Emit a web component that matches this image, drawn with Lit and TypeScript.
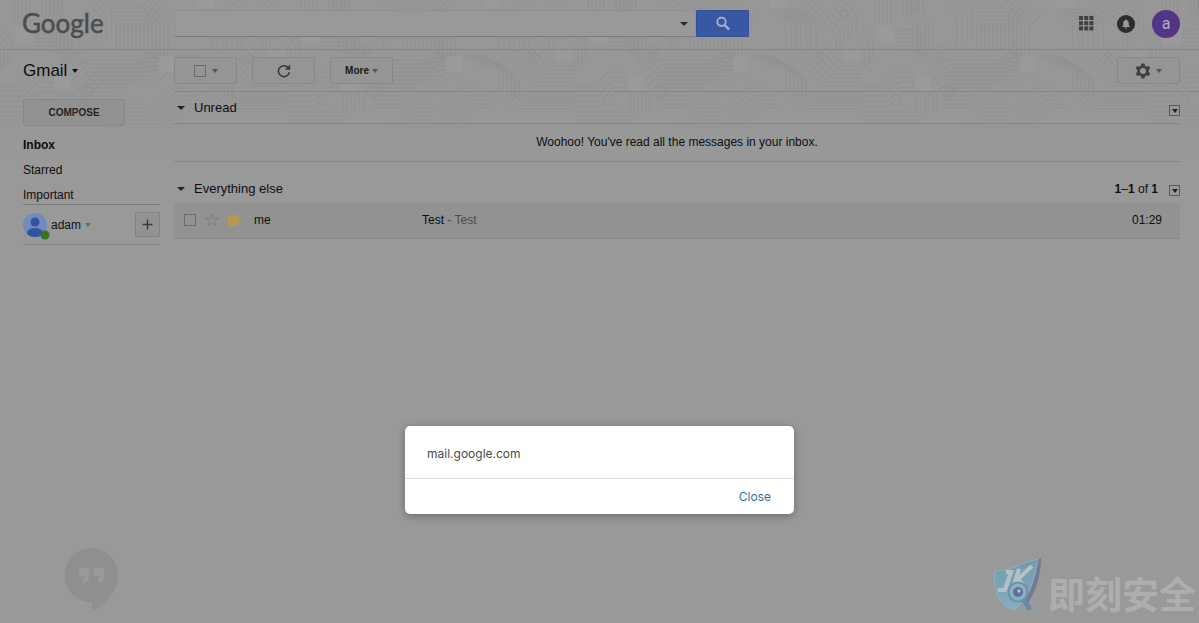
import { LitElement, html, svg, css } from "lit";
import { customElement, state, property } from "lit/decorators.js";

type Pt = [number, number];

/** A bundle of parallel traces: the same polyline repeated with a fixed shift. */
const bundle = (points: Pt[], count: number, dx: number, dy: number): string => {
  let d = "";
  for (let i = 0; i < count; i++) {
    d += points.map(([x, y], k) => `${k ? "L" : "M"}${x + dx * i} ${y + dy * i}`).join("");
  }
  return d;
};

const TRACES = [
  bundle([[42, 0], [42, 14], [52, 26], [52, 49], [66, 64]], 6, 4, 0),
  bundle([[0, 28], [12, 40], [12, 58], [0, 70]], 5, -4, 4),
  bundle([[66, 78], [84, 60], [140, 60], [154, 46]], 6, 4, 4),
  bundle([[84, 72], [128, 72], [146, 54], [160, 54]], 5, 0, 4),
  bundle([[35, 30], [56, 30], [66, 40]], 6, 0, 4),
  bundle([[14, 0], [14, 24]], 5, 4, 0),
  bundle([[84, 8], [96, 20], [96, 46]], 4, 5, -3),
  bundle([[110, 8], [140, 8], [152, -4]], 5, 3, 4),
  bundle([[116, 24], [116, 52]], 8, 4, 0),
  bundle([[160, 0], [148, 12], [148, 50], [156, 60]], 6, 4, 3),
  bundle([[176, 56], [198, 56], [212, 70], [212, 90]], 6, 4, 2),
  bundle([[200, 14], [212, 26], [212, 46], [226, 62]], 7, 5, 0),
  bundle([[246, 18], [262, 34], [262, 52]], 6, 4, -4),
  bundle([[230, 66], [250, 86], [280, 86]], 6, 4, -4),
  bundle([[-8, 86], [20, 86], [34, 72], [50, 72]], 5, 2, 5),
  bundle([[56, 92], [56, 114]], 6, 4, 0),
  bundle([[84, 92], [112, 92], [124, 104], [146, 104]], 5, 0, 4),
  bundle([[150, 110], [172, 88], [188, 88]], 6, 4, 4),
  bundle([[214, 100], [226, 112], [284, 112]], 6, 3, -3),
  bundle([[-10, 112], [60, 112]], 4, 0, 4),
  bundle([[100, 120], [180, 120]], 4, 0, 4),
  bundle([[238, 0], [228, 10], [200, 10]], 5, 5, 3),
].join("");

const CHIPS = [
  [15, 26, 18, 18],
  [159, 56, 16, 16],
  [54, 75, 16, 16],
  [196, 0, 18, 8],
  [269, 51, 18, 8],
];

const caret = (cls = "") => html`<span class="caret ${cls}"></span>`;

const caretStyles = css`
  .caret {
    display: inline-block;
    width: 0;
    border: 3px solid transparent;
    border-top: 4px solid #555;
    border-bottom: 0;
  }
  .caret.mid {
    border-width: 4px;
    border-top-color: #2a2a2a;
    border-bottom: 0;
  }
  .caret.dark {
    border-top-color: #111;
  }
`;

const buttonStyles = css`
  * {
    box-sizing: border-box;
  }
  button {
    font: inherit;
    color: inherit;
    padding: 0;
    border: 0;
    background: none;
    cursor: pointer;
  }
`;

@customElement("circuit-backdrop")
class CircuitBackdrop extends LitElement {
  static styles = css`
    :host {
      display: block;
      height: 160px;
      background: #979797;
      mask-image: linear-gradient(#000 60%, transparent);
    }
    svg {
      display: block;
      width: 100%;
      height: 100%;
    }
  `;

  render() {
    return html`<svg aria-hidden="true">
      <defs>
        <pattern id="board" width="287" height="160" patternUnits="userSpaceOnUse">
          <path d=${TRACES} fill="none" stroke="#8f8f8f" stroke-width="1" />
          <g fill="none" stroke="#8f8f8f">
            <circle cx="270" cy="14" r="4" />
            <circle cx="53" cy="7" r="4" />
            <circle cx="80" cy="50" r="4" />
            <circle cx="86" cy="92" r="6" />
            <circle cx="35" cy="100" r="5" />
          </g>
          ${CHIPS.map(
            ([x, y, w, h]) => svg`<rect x=${x} y=${y} width=${w} height=${h} rx="1" fill="#9a9a9a"></rect>`
          )}
        </pattern>
      </defs>
      <rect width="100%" height="160" fill="url(#board)" />
    </svg>`;
  }
}

@customElement("top-bar")
class TopBar extends LitElement {
  static styles = [
    caretStyles,
    buttonStyles,
    css`
      :host {
        display: flex;
        align-items: flex-start;
        height: 50px;
        padding: 10px 19px 0 22px;
        border-bottom: 1px solid #858585;
      }
      .logo {
        width: 152px;
        flex: none;
        font: 26px/26px Lato, sans-serif;
        color: #4c4c4c;
        text-decoration: none;
        -webkit-text-stroke: 0.5px #4c4c4c;
      }
      form {
        display: flex;
        width: 575px;
        height: 27px;
      }
      .box {
        flex: 1;
        display: flex;
        align-items: center;
        background: #999;
        border: 1px solid #909090;
        border-bottom-color: #7c7c7c;
      }
      input {
        flex: 1;
        min-width: 0;
        height: 100%;
        border: 0;
        padding: 0 8px;
        outline: 0;
        background: none;
        font: 13px "Liberation Sans", Arial, sans-serif;
      }
      .options {
        width: 22px;
        height: 100%;
        display: grid;
        place-items: center;
      }
      .go {
        width: 53px;
        display: grid;
        place-items: center;
        background: #3958a3;
        border: 1px solid #324f98;
        border-radius: 1px;
      }
      .account {
        margin-left: auto;
        display: flex;
        align-items: center;
        height: 27px;
      }
      .account button {
        display: grid;
        place-items: center;
      }
      .apps {
        margin-right: 23px;
      }
      .bell {
        margin-right: 17px;
      }
      .account .avatar {
        width: 28px;
        height: 28px;
        border-radius: 50%;
        background: #523586;
        color: #b5adc4;
        font: 16px/28px Roboto, sans-serif;
      }
    `,
  ];

  render() {
    return html`
      <a class="logo" href="#">Google</a>
      <form role="search" @submit=${(e: Event) => e.preventDefault()}>
        <div class="box">
          <input type="text" aria-label="Search mail" />
          <button class="options" type="button" aria-label="Search options">${caret("mid")}</button>
        </div>
        <button class="go" aria-label="Search">
          <svg width="16" height="16" viewBox="0 0 16 16" fill="none" stroke="#a9b3c9" stroke-width="1.8">
            <circle cx="6.5" cy="5.8" r="4.2" />
            <path d="M9.6 9 14.2 13.6" stroke-width="2.2" />
          </svg>
        </button>
      </form>
      <div class="account">
        <button class="apps" aria-label="Apps">
          <svg width="15" height="15" viewBox="0 0 15 15" fill="#404040">
            ${[0, 5.2, 10.4].map((y) =>
              [0, 5.2, 10.4].map((x) => svg`<rect x=${x} y=${y} width="4" height="4"></rect>`)
            )}
          </svg>
        </button>
        <button class="bell" aria-label="Notifications">
          <svg width="18" height="18" viewBox="0 0 18 18">
            <circle cx="9" cy="9" r="9" fill="#2c2c2c" />
            <path
              fill="#9a9a9a"
              d="M9 4.2c.5 0 .8.3.8.8v.2c1.3.4 2 1.5 2 2.9v2.4l1 1v.5H5.2v-.5l1-1V8.1c0-1.4.7-2.500 2-2.900V5c0-.5.3-.8.8-.8zM8 12.500h2c0 .6-.4 1-1 1s-1-.4-1-1z"
            />
          </svg>
        </button>
        <button class="avatar" aria-label="Account">a</button>
      </div>
    `;
  }
}

@customElement("side-nav")
class SideNav extends LitElement {
  static styles = [
    caretStyles,
    buttonStyles,
    css`
      :host {
        display: block;
        width: 160px;
        flex: none;
        padding-left: 23px;
      }
      .app {
        display: flex;
        align-items: center;
        gap: 5px;
        height: 42px;
        font-size: 17px;
        color: #0c0c0c;
      }
      .compose {
        display: block;
        width: 102px;
        height: 27px;
        margin: 7px 0;
        border: 1px solid #868686;
        border-radius: 2px;
        background: #919191;
        font-size: 10px;
        font-weight: bold;
        color: #242424;
      }
      nav {
        display: flex;
        flex-direction: column;
        border-bottom: 1px solid #7c7c7c;
      }
      nav a {
        height: 25px;
        line-height: 25px;
        color: #0e0e0e;
        text-decoration: none;
      }
      nav a:last-child {
        height: 21px;
      }
      nav .current {
        font-weight: bold;
      }
      .person {
        display: flex;
        align-items: center;
        height: 40px;
        border-bottom: 1px solid #868686;
      }
      .name {
        display: flex;
        align-items: center;
        gap: 4px;
        color: #111;
      }
      .name .caret {
        border-top-color: #6b6b6b;
      }
      .face {
        flex: none;
        margin-right: 1px;
      }
      .add {
        margin-left: auto;
        width: 25px;
        height: 25px;
        display: grid;
        place-items: center;
        border: 1px solid #848484;
        border-radius: 1px;
        background: #929292;
      }
    `,
  ];

  render() {
    return html`
      <button class="app">Gmail ${caret("dark")}</button>
      <button class="compose">COMPOSE</button>
      <nav aria-label="Mailboxes">
        <a class="current" href="#inbox">Inbox</a>
        <a href="#starred">Starred</a>
        <a href="#important">Important</a>
      </nav>
      <div class="person">
        <svg class="face" width="27" height="30" viewBox="0 0 27 30" aria-hidden="true">
          <defs>
            <clipPath id="disc"><circle cx="12" cy="15" r="12" /></clipPath>
          </defs>
          <circle cx="12" cy="15" r="12" fill="#6f8bc0" />
          <g clip-path="url(#disc)" fill="#3353a1">
            <circle cx="12" cy="12" r="4.5" />
            <ellipse cx="12" cy="23" rx="8" ry="5" />
          </g>
          <circle cx="22" cy="25" r="4.5" fill="#347523" />
        </svg>
        <button class="name">adam ${caret()}</button>
        <button class="add" aria-label="New conversation">
          <svg width="11" height="11" viewBox="0 0 11 11" stroke="#3a3a3a" stroke-width="1.4">
            <path d="M5.5 .5V10.5M.5 5.5H10.5" />
          </svg>
        </button>
      </div>
    `;
  }
}

@customElement("mail-toolbar")
class MailToolbar extends LitElement {
  static styles = [
    caretStyles,
    buttonStyles,
    css`
      :host {
        display: flex;
        align-items: center;
        gap: 15px;
        height: 42px;
        padding-right: 19px;
        border-bottom: 1px solid #868686;
      }
      .tool {
        width: 63px;
        height: 27px;
        display: flex;
        align-items: center;
        justify-content: center;
        border: 1px solid #888;
        border-radius: 2px;
        background: #959595;
        font-size: 10px;
        font-weight: bold;
        color: #1a1a1a;
      }
      .pick {
        gap: 6px;
      }
      .pick button {
        display: grid;
      }
      .more {
        gap: 3px;
      }
      .settings {
        gap: 5px;
        margin-left: auto;
      }
      input {
        appearance: none;
        width: 12px;
        height: 12px;
        margin: 0;
        border: 1px solid #6c6c6c;
      }
    `,
  ];

  render() {
    return html`
      <div class="tool pick">
        <input type="checkbox" aria-label="Select all" />
        <button aria-label="Select menu">${caret()}</button>
      </div>
      <button class="tool" aria-label="Refresh">
        <svg width="14" height="14" viewBox="0 0 14 14" fill="none" stroke="#383838" stroke-width="1.5">
          <path d="M12.4 8A5.5 5.5 0 1 1 11 3.4" />
          <path d="M13.2 .6V5.800H8z" fill="#383838" stroke="none" />
        </svg>
      </button>
      <button class="tool more">More ${caret()}</button>
      <button class="tool settings" aria-label="Settings">
        <svg width="16" height="16" viewBox="0 0 16 16">
          <g fill="#404040">
            ${[0, 60, 120].map(
              (a) => svg`<rect x="6.200" y="0.500" width="3.600" height="15" rx=".6" transform="rotate(${a} 8 8)"></rect>`
            )}
            <circle cx="8" cy="8" r="5.800" />
          </g>
          <circle cx="8" cy="8" r="3" fill="#979797" />
        </svg>
        ${caret()}
      </button>
    `;
  }
}

@customElement("section-head")
class SectionHead extends LitElement {
  @property() label = "";
  @property({ type: Number }) total = 0;

  static styles = [
    caretStyles,
    buttonStyles,
    css`
      :host {
        display: flex;
        align-items: center;
        padding-left: 3px;
      }
      .title {
        display: flex;
        align-items: center;
        gap: 9px;
        font-size: 13px;
        color: #0e0e0e;
      }
      .title .caret,
      .menu .caret {
        border-top-color: #222;
      }
      .range {
        margin-left: auto;
        color: #111;
      }
      .menu {
        width: 11px;
        height: 11px;
        margin: 0 0 7px 11px;
        align-self: flex-end;
        display: grid;
        place-items: center;
        border: 1px solid #5a5a5a;
      }
    `,
  ];

  render() {
    return html`
      <button class="title">${caret("mid")} ${this.label}</button>
      <span class="range"
        >${this.total ? html`<b>1</b>–<b>${this.total}</b> of <b>${this.total}</b>` : ""}</span
      >
      <button class="menu" aria-label="${this.label} options">${caret()}</button>
    `;
  }
}

@customElement("mail-list")
class MailList extends LitElement {
  static styles = [
    buttonStyles,
    css`
      :host {
        display: block;
        padding-right: 19px;
      }
      section-head {
        height: 28px;
      }
      .unread {
        height: 31px;
      }
      .empty {
        margin: 0 0 13px;
        height: 39px;
        line-height: 36px;
        text-align: center;
        color: #0e0e0e;
        border: solid #868686;
        border-width: 1px 0;
      }
      table {
        width: 100%;
        table-layout: fixed;
        border-collapse: collapse;
        background: #929292;
        border-bottom: 1px solid #868686;
      }
      td {
        height: 35px;
        padding: 0;
        color: #0e0e0e;
        white-space: nowrap;
      }
      .marks {
        width: 80px;
      }
      .marks div {
        display: flex;
        align-items: center;
        gap: 9px;
        padding-left: 10px;
      }
      .marks button {
        display: grid;
      }
      .from {
        width: 168px;
      }
      .time {
        width: 65px;
        padding-right: 18px;
        text-align: right;
      }
      .snippet {
        color: #4c4c4c;
      }
      input {
        appearance: none;
        width: 12px;
        height: 12px;
        margin: 0;
        border: 1px solid #6c6c6c;
      }
    `,
  ];

  render() {
    return html`
      <section-head class="unread" label="Unread"></section-head>
      <p class="empty">Woohoo! You've read all the messages in your inbox.</p>
      <section-head label="Everything else" total="1"></section-head>
      <table aria-label="Everything else">
        <tr>
          <td class="marks">
            <div>
              <input type="checkbox" aria-label="Select message" />
              <button aria-label="Star">
                <svg width="14" height="14" viewBox="0 0 14 14" fill="none" stroke="#808080">
                  <path d="M7 .8 8.600 5.200H13.300L9.500 8 10.900 12.700 7 9.900 3.100 12.700 4.500 8 .7 5.200H5.400z" />
                </svg>
              </button>
              <button aria-label="Important">
                <svg width="13" height="11" viewBox="0 0 13 11" fill="#b8984f">
                  <path d="M0 0H9L13 5.500 9 11H0z" />
                </svg>
              </button>
            </div>
          </td>
          <td class="from">me</td>
          <td>Test <span class="snippet">- Test</span></td>
          <td class="time">01:29</td>
        </tr>
      </table>
    `;
  }
}

@customElement("app-root")
class AppRoot extends LitElement {
  @state() private open = true;

  static styles = [
    buttonStyles,
    css`
      :host {
        display: block;
        position: relative;
        min-height: 100vh;
        overflow: hidden;
        background: #999;
        font: 12px/16px "Liberation Sans", Arial, sans-serif;
      }
      circuit-backdrop {
        position: absolute;
        inset: 0 0 auto;
      }
      .page {
        position: relative;
      }
      .columns {
        display: flex;
        gap: 14px;
      }
      main {
        flex: 1;
        min-width: 0;
      }
      dialog {
        position: absolute;
        inset: auto 0 109px;
        width: 389px;
        margin: 0 auto;
        padding: 0;
        border: 0;
        border-radius: 5px;
        background: #fff;
        box-shadow: 0 2px 8px rgba(0, 0, 0, 0.3);
        font-family: Inter, sans-serif;
        font-size: 12px;
        color: #4a4a4a;
      }
      dialog p {
        margin: 0;
        padding: 20px 22px 16px;
        border-bottom: 1px solid #dedede;
      }
      dialog form {
        display: flex;
        justify-content: flex-end;
        padding: 10px 23px 9px;
      }
      dialog button {
        color: #3b69a8;
      }
      .hangouts {
        position: absolute;
        left: 64px;
        bottom: 11px;
      }
      .mark {
        position: absolute;
        right: 3px;
        bottom: 10px;
        display: flex;
        align-items: flex-end;
        gap: 6px;
        font: bold 37px/40px "Noto Sans CJK SC", sans-serif;
        color: #adaeb0;
      }
    `,
  ];

  render() {
    return html`
      <circuit-backdrop></circuit-backdrop>
      <div class="page">
        <top-bar></top-bar>
        <div class="columns">
          <side-nav></side-nav>
          <main>
            <mail-toolbar></mail-toolbar>
            <mail-list></mail-list>
          </main>
        </div>
      </div>
      <svg class="hangouts" width="54" height="64" viewBox="0 0 54 64" aria-hidden="true">
        <path fill="#8f8f8f" d="M27 0A27 27 0 0 1 54 27C54 42 42 56 28 64V54A27 27 0 0 1 27 0z" />
        <path
          fill="#9a9a9a"
          d="M15 20H25V29Q25 34 19 35V32Q21 31 21 28H15zM30 20H40V29Q40 34 34 35V32Q36 31 36 28H30z"
        />
      </svg>
      <div class="mark">
        <svg width="50" height="56" viewBox="0 0 50 56" aria-hidden="true">
          <defs>
            <linearGradient id="shield" x1="0" y1="0" x2="0" y2="1">
              <stop offset="0" stop-color="#7399ad" />
              <stop offset="1" stop-color="#86aebf" />
            </linearGradient>
          </defs>
          <path fill="#727a94" d="M40 5 49 1C49 18 44 34 36 46L32 42z" />
          <path fill="url(#shield)" stroke="#8fb0be" d="M3 14Q14 14 23 10 32 5 46 2C43 20 38 42 22 53 8 49 0 34 3 14z" />
          <path fill="none" stroke="#b4c2c8" stroke-width="4" d="M14 15H19L13 33H6M27 12 21 31M40 9 26 22 32 29" />
          <path stroke="#648aa4" stroke-width="5" stroke-linecap="round" d="M32 43 37 51" />
          <circle cx="26" cy="35" r="9.500" fill="#89b0c4" stroke="#6a92ab" stroke-width="2" />
          <circle cx="26" cy="35" r="5" fill="#5b729a" />
          <circle cx="27" cy="34" r="1.800" fill="#b0bfcd" />
        </svg>
        <span lang="zh-CN">即刻安全</span>
      </div>
      <dialog ?open=${this.open} aria-label="mail.google.com">
        <p>mail.google.com</p>
        <form @submit=${(e: Event) => e.preventDefault()}>
          <button type="button" @click=${() => (this.open = false)}>Close</button>
        </form>
      </dialog>
    `;
  }
}
